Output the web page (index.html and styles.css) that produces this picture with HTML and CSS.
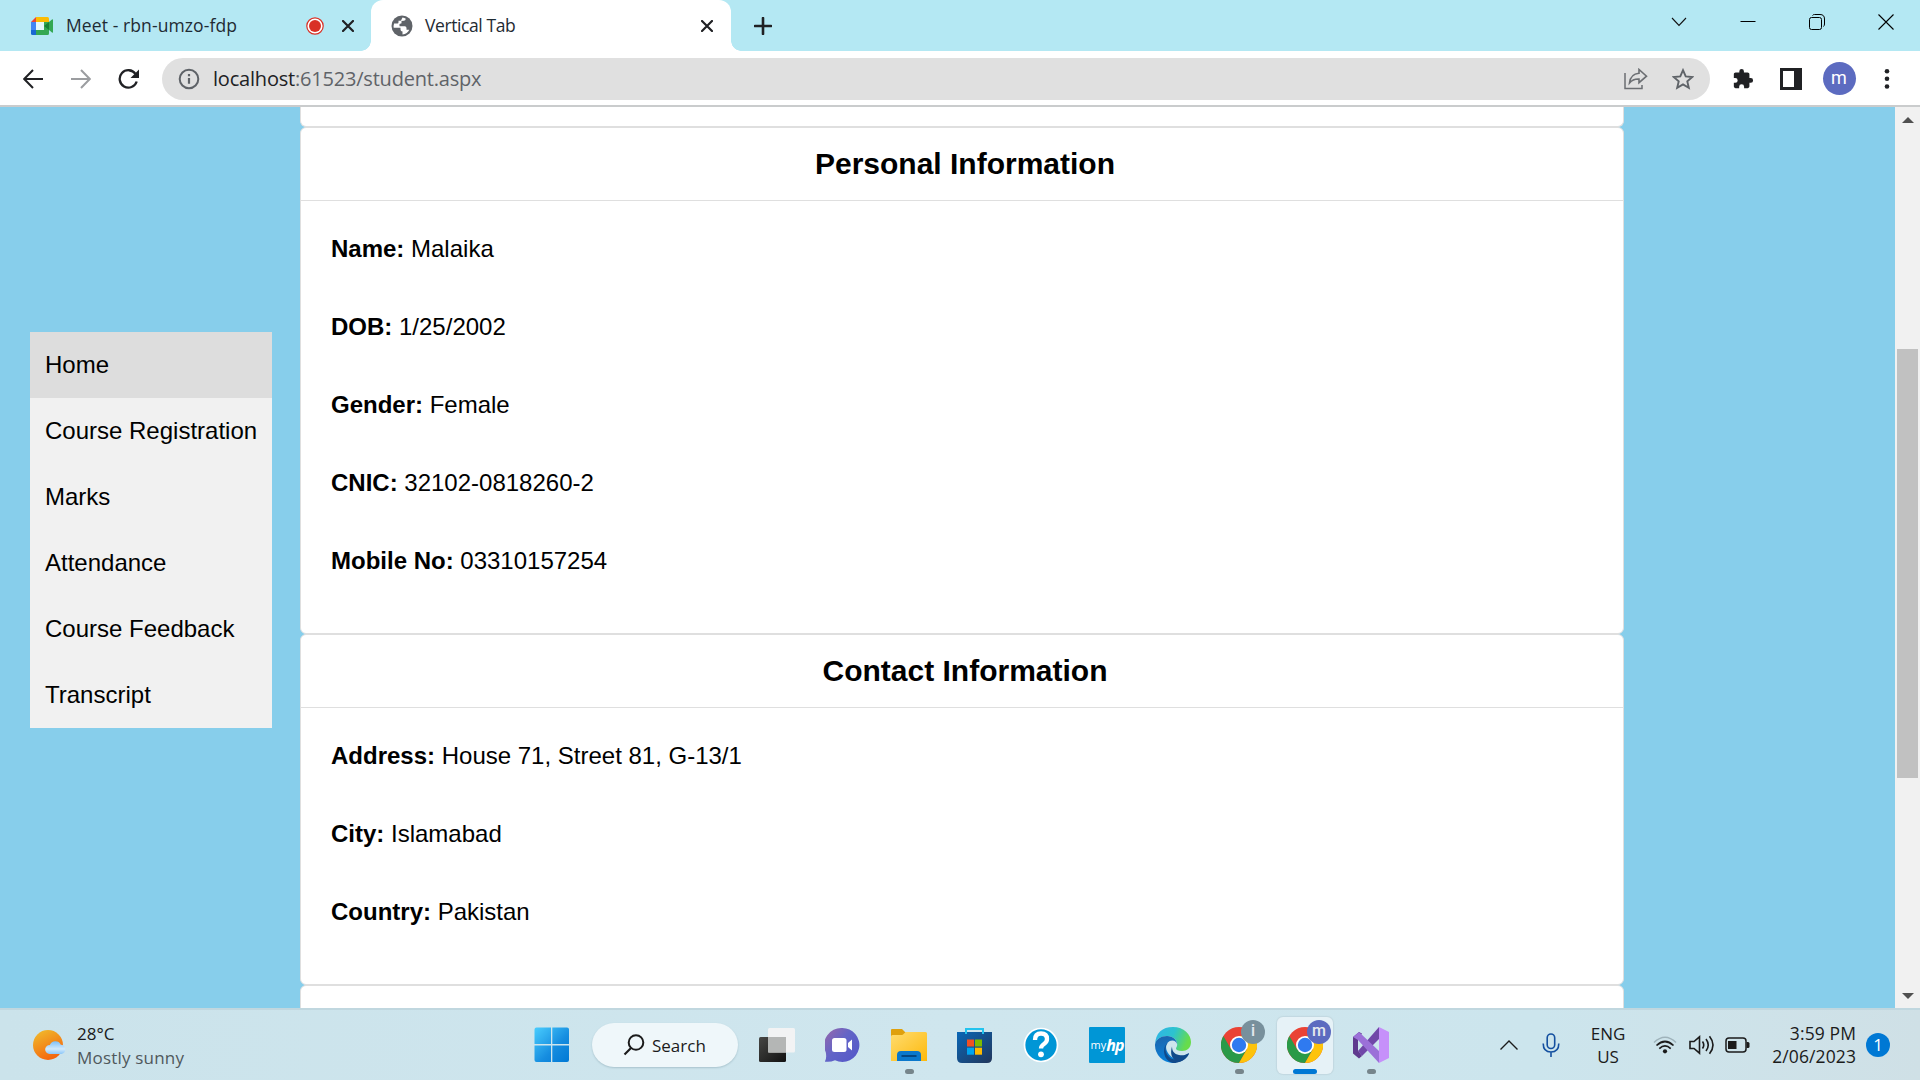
FILE: index.html
```html
<!DOCTYPE html>
<html lang="en">
<head>
<meta charset="utf-8">
<title>Vertical Tab</title>
<link rel="stylesheet" href="styles.css">
</head>
<body>
<header class="tabstrip">
  <div class="tab">
    <svg class="favicon" width="22" height="18" viewBox="0 0 22 18"><path d="M0 5 5 0v5z" fill="#ea4335"/><path d="M5 0h11.500q1.500 0 1.500 1.500V5H5z" fill="#fbbc04"/><path d="M0 5h5v8H0z" fill="#4285f4"/><path d="M0 13h5v5H1.500Q0 18 0 16.500z" fill="#1967d2"/><path d="M5 5h8v8H5z" fill="#e4f7fb"/><path d="M5 13h8V5h5v11.500q0 1.500-1.500 1.500H5z" fill="#34a853"/><path d="M13 9l5-4v8z" fill="#188038"/><path d="M18 5l3-2.600q1-.6 1 .6v12q0 1.200-1 .6L18 13z" fill="#34a853"/></svg>
    <span class="tab-title title-meet">Meet - rbn-umzo-fdp</span>
    <svg class="rec" width="18" height="18" viewBox="0 0 18 18"><circle cx="9" cy="9" r="8.200" fill="#fff" stroke="#d93025" stroke-width="1.200"/><circle cx="9" cy="9" r="6" fill="#d93025"/></svg>
    <svg class="close" width="12" height="12" viewBox="0 0 12 12"><path d="M1 1l10 10M11 1L1 11" stroke="#202124" stroke-width="2.200" stroke-linecap="round"/></svg>
  </div>
  <div class="tab active">
    <svg class="favicon" width="22" height="22" viewBox="0 0 22 22"><circle cx="11" cy="11" r="10.500" fill="#5f6368"/><path d="M11.500 2.500q2.200.2 3.300 1.200-.2 1.800-2 2l-2.300.4v2.200l-2 .8v2.100h5.300q1.700 0 1.700 1.700v1.800h2.800q-1.800 4.200-6.800 4.800v-3q-2-.2-2-2v-1.700H2.700q-.4-2 .4-4.300h3.400q1 0 1-1.200V5.800h1.800q1.200 0 1.200-1.300z" fill="#fff"/></svg>
    <span class="tab-title title-vertical">Vertical Tab</span>
    <svg class="close" width="12" height="12" viewBox="0 0 12 12"><path d="M1 1l10 10M11 1L1 11" stroke="#202124" stroke-width="2.200" stroke-linecap="round"/></svg>
  </div>
  <svg class="newtab" width="18" height="18" viewBox="0 0 18 18"><path d="M9 1v16M1 9h16" stroke="#202124" stroke-width="2.600" stroke-linecap="round"/></svg>
  <div class="winctl">
    <svg width="16" height="16" viewBox="0 0 16 16"><path d="M1 4l7 7.500L15 4" fill="none" stroke="#111" stroke-width="1.100"/></svg>
    <svg width="16" height="16" viewBox="0 0 16 16"><path d="M.5 7.500h15" stroke="#000"/></svg>
    <svg width="16" height="16" viewBox="0 0 16 16"><rect x=".5" y="3.500" width="12" height="12" rx="2" fill="none" stroke="#000"/><path d="M3.500 1.500Q4 .5 5.500.5H11q4.500 0 4.500 4.500v5q0 1.500-1 2.500" fill="none" stroke="#000"/></svg>
    <svg width="16" height="16" viewBox="0 0 16 16"><path d="M.5.5l15 15M15.500.5l-15 15" stroke="#000" stroke-width="1.100"/></svg>
  </div>
</header>
<div class="toolbar">
  <div class="cell"><svg width="20" height="20" viewBox="0 0 20 20"><path d="M20 10H1.500M10 1L1.200 10l8.800 9" fill="none" stroke="#202124" stroke-width="2"/></svg></div>
  <div class="cell"><svg width="20" height="20" viewBox="0 0 20 20"><path d="M0 10h18.500M10 1l8.800 9-8.800 9" fill="none" stroke="#9b9da0" stroke-width="2"/></svg></div>
  <div class="cell"><svg width="22" height="20" viewBox="0 0 22 20"><path d="M18.700 12.500A8.700 8.700 0 1 1 17.500 4.900" fill="none" stroke="#202124" stroke-width="2.300"/><path d="M21 .5V9h-8.500z" fill="#202124"/></svg></div>
  <div class="omnibox">
    <svg width="22" height="22" viewBox="0 0 22 22"><circle cx="11" cy="11" r="9.300" fill="none" stroke="#5f6368" stroke-width="2"/><path d="M11 10v5.800M11 6v2.200" stroke="#5f6368" stroke-width="2.200"/></svg>
    <span class="url"><b>localhost</b>:61523/student.aspx</span>
    <div class="cell"><svg width="24" height="22" viewBox="0 0 24 22"><path d="M1 5v15.500h17V17" fill="none" stroke="#6b6e72" stroke-width="1.500"/><path d="M5.500 15q1-9 9.500-9.700V1.500l7.500 6.700-7.500 6.500V11q-6-.3-9.500 4z" fill="none" stroke="#6b6e72" stroke-width="1.600"/></svg></div>
    <div class="cell star"><svg width="22" height="22" viewBox="0 0 22 22"><path d="M11 2.200l2.700 6.200 6.600.6-5 4.400 1.500 6.500-5.800-3.500-5.800 3.500 1.500-6.500-5-4.400 6.600-.6z" fill="none" stroke="#5f6368" stroke-width="1.900"/></svg></div>
  </div>
  <div class="cell"><svg width="22" height="22" viewBox="0 0 24 24"><path d="M20.500 11H19V7c0-1.100-.9-2-2-2h-4V3.500a2.500 2.500 0 0 0-5 0V5H4c-1.100 0-2 .9-2 2v3.800h1.500a2.700 2.700 0 0 1 0 5.400H2V20c0 1.100.9 2 2 2h3.800v-1.500a2.700 2.700 0 0 1 5.400 0V22H17c1.100 0 2-.9 2-2v-4h1.500a2.500 2.500 0 0 0 0-5z" fill="#202124"/></svg></div>
  <div class="cell"><svg width="22" height="22" viewBox="0 0 22 22"><path d="M0 0h22v22H0z" fill="#202124"/><path d="M3 3h11v16H3z" fill="#fff"/></svg></div>
  <div class="cell"><div class="avatar">m</div></div>
  <div class="cell"><svg width="6" height="22" viewBox="0 0 6 22"><g fill="#202124"><circle cx="3" cy="3.200" r="2.300"/><circle cx="3" cy="10.800" r="2.300"/><circle cx="3" cy="18.500" r="2.300"/></g></svg></div>
</div>
<div class="page">
  <nav class="menu">
    <a class="current">Home</a><a>Course Registration</a><a>Marks</a><a>Attendance</a><a>Course Feedback</a><a>Transcript</a>
  </nav>
  <main class="cards">
    <section class="card previous"></section>
    <section class="card personal">
      <h2>Personal Information</h2>
      <div class="card-body">
        <p><b>Name:</b> Malaika</p><p><b>DOB:</b> 1/25/2002</p><p><b>Gender:</b> Female</p><p><b>CNIC:</b> 32102-0818260-2</p><p><b>Mobile No:</b> 03310157254</p>
      </div>
    </section>
    <section class="card contact">
      <h2>Contact Information</h2>
      <div class="card-body">
        <p><b>Address:</b> House 71, Street 81, G-13/1</p><p><b>City:</b> Islamabad</p><p><b>Country:</b> Pakistan</p>
      </div>
    </section>
    <section class="card next"></section>
  </main>
  <div class="scrollbar">
    <svg width="12" height="6" viewBox="0 0 12 6"><path d="M0 6l6-6 6 6z" fill="#505050"/></svg>
    <div class="thumb"></div>
    <svg width="12" height="6" viewBox="0 0 12 6"><path d="M0 0l6 6 6-6z" fill="#505050"/></svg>
  </div>
</div>
<footer class="taskbar">
  <div class="weather">
    <svg width="34" height="32" viewBox="0 0 34 32"><defs><linearGradient id="sun" x1=".2" y1="0" x2=".7" y2="1"><stop stop-color="#f0b92c"/><stop offset="1" stop-color="#f4600c"/></linearGradient><linearGradient id="cloud" x1="0" y1="0" x2="0" y2="1"><stop stop-color="#7cc0fa"/><stop offset=".6" stop-color="#d2eafc"/><stop offset="1" stop-color="#8cc7f8"/></linearGradient></defs><circle cx="15" cy="16" r="15" fill="url(#sun)"/><path d="M16.500 25a4.500 4.500 0 0 1 .3-9 6 6 0 0 1 11-.3A4.700 4.700 0 0 1 28.500 25z" fill="url(#cloud)"/></svg>
    <div><div class="temp">28°C</div><div class="sky">Mostly sunny</div></div>
  </div>
  <div class="apps">
    <div class="app"><svg width="36" height="36" viewBox="0 0 36 36"><defs><linearGradient id="win" gradientUnits="userSpaceOnUse" x1="0" y1="0" x2="36" y2="36"><stop stop-color="#4cd0ff"/><stop offset=".6" stop-color="#158cdf"/><stop offset="1" stop-color="#0078d4"/></linearGradient></defs><path d="M1.500 2.500q0-2 2-2H18V17H1.500zM19.300.5h14.700q2 0 2 2V17H19.300zM1.500 18.500H18V35H3.500q-2 0-2-2zM19.300 18.500H36V33q0 2-2 2H19.300z" fill="url(#win)"/></svg></div>
    <div class="search"><svg width="22" height="22" viewBox="0 0 22 22"><circle cx="13" cy="8.500" r="7.300" fill="none" stroke="#1b1b1b" stroke-width="2"/><path d="M8 14L1.500 20.500" stroke="#1b1b1b" stroke-width="2.200"/></svg><span>Search</span></div>
    <div class="app"><svg width="36" height="36" viewBox="0 0 36 36"><defs><linearGradient id="dark" x1="0" y1="0" x2="1" y2="1"><stop stop-color="#474745"/><stop offset="1" stop-color="#111"/></linearGradient></defs><rect x="0" y="10" width="27" height="25" rx="1.500" fill="url(#dark)"/><rect x="9" y="1" width="27" height="24.500" rx="1.500" fill="#f2f3f4"/><path d="M9 10h18v15.500H9z" fill="#b4b6b5"/></svg></div>
    <div class="app"><svg width="36" height="36" viewBox="0 0 36 36"><defs><linearGradient id="chat" x1="0" y1="0" x2="1" y2=".8"><stop stop-color="#9a68aa"/><stop offset=".5" stop-color="#6264c7"/><stop offset="1" stop-color="#5558c8"/></linearGradient></defs><path d="M17 1a17 17 0 1 1-7 32.300Q5 35.500-.2 34.600 2 31 .7 25A17 17 0 0 1 17 1z" fill="url(#chat)"/><rect x="7" y="11" width="14.500" height="14" rx="2.500" fill="#fff"/><path d="M23 16l4-3.500v11L23 20z" fill="#fff"/></svg></div>
    <div class="app run"><svg width="36" height="36" viewBox="0 0 36 36"><defs><linearGradient id="folder" x1="0" y1="0" x2="1" y2="1"><stop stop-color="#ffdc70"/><stop offset="1" stop-color="#fdb90c"/></linearGradient></defs><path d="M0 3q0-1 1-1h10l4 4h20v6H0z" fill="#dfa00d"/><path d="M0 9.500Q0 8 1.500 8h9Q12 8 13 6.500l2-1.500h19.500Q36 5 36 6.500V34H0z" fill="url(#folder)"/><path d="M6 34v-6q0-4 4-4h16q4 0 4 4v6z" fill="#0a78cc"/><path d="M10.500 29h15" stroke="#034783" stroke-width="2"/></svg></div>
    <div class="app"><svg width="36" height="36" viewBox="0 0 36 36"><defs><linearGradient id="bag" x1="0" y1="0" x2="1" y2="1"><stop stop-color="#0967b7"/><stop offset="1" stop-color="#22365b"/></linearGradient></defs><path d="M0 5h35v26q0 5-5 5H5q-5 0-5-5z" fill="url(#bag)"/><path d="M9 7V2h17v5" fill="none" stroke="#23c3ee" stroke-width="2"/><path d="M10 12.500h7v7h-7z" fill="#f25022"/><path d="M18 12.500h7v7h-7z" fill="#7fba00"/><path d="M10 20.700h7v7h-7z" fill="#00a4ef"/><path d="M18 20.700h7v7h-7z" fill="#ffb900"/></svg></div>
    <div class="app"><svg width="36" height="36" viewBox="0 0 36 36"><circle cx="18" cy="18" r="16.500" fill="#0096d6" stroke="#fff" stroke-width="1.700"/><path d="M12 13q0-6.500 6-6.500t6 5.500q0 3-3 5t-3 4.500" fill="none" stroke="#fff" stroke-width="4.300"/><circle cx="18" cy="27.300" r="2.900" fill="#fff"/></svg></div>
    <div class="app"><div class="myhp"><span>my</span><b>hp</b></div></div>
    <div class="app"><svg width="36" height="36" viewBox="0 0 36 36"><defs><linearGradient id="edgeTop" x1="0" y1="0" x2="1" y2=".3"><stop stop-color="#2fb4e8"/><stop offset=".55" stop-color="#2dc3cf"/><stop offset="1" stop-color="#67dc4b"/></linearGradient><linearGradient id="edgeLeft" x1=".3" y1="0" x2=".5" y2="1"><stop stop-color="#1b65ad"/><stop offset="1" stop-color="#0882dc"/></linearGradient></defs><path d="M0 17Q1.500 0 18 0c11 0 18 7.500 18 15 0 6-4 9-9 9-4 0-6-1-6-2.500 0-1 1.200-1.500 1.200-4C22.200 13 18 9 12 9 5 9 1 13 0 17z" fill="url(#edgeTop)"/><path d="M0 17.500C1 12 6 9 12 9c6 0 10 4 10.200 8.500-.3-2-2.200-4-5-4-4.200 0-7.500 5-5.500 10 2.400 6 7 8.500 12.300 8.500-1 2.300-3.400 4-6 4A18 18 0 0 1 0 17.500z" fill="url(#edgeLeft)"/><path d="M14 15c-4 2.500-4.500 8-2 12.500 3 5 8.500 6 12.500 4.500 3-1 6-2.500 9-5.500-4 7-9 9.500-15.500 9.500C11 34.500 9 28 9 24c0-4 2-7.500 5-9z" fill="#114a8b"/><path d="M24 35c5-1.500 8-4 10-8 .3-.8-.2-1-1-.5-3.500 2-6 2-9 1.500-5-1-7-4-7-8.500-2 7-1 13 7 15.500z" fill="#114a8b"/></svg></div>
    <div class="app run"><svg width="36" height="36" viewBox="0 0 36 36"><use href="#chrome"/></svg><span class="badge grey">i</span></div>
    <div class="app focus"><svg width="36" height="36" viewBox="0 0 36 36"><g id="chrome"><circle cx="18" cy="18" r="18" fill="#ea4335"/><path d="M2.400 9A18 18 0 0 0 18 36l7.800-13.500H10.200z" fill="#2a9a48"/><path d="M33.600 9A18 18 0 0 1 18 36l7.800-13.500L18 9z" fill="#fdc30b"/><circle cx="18" cy="18" r="9" fill="#fff"/><circle cx="18" cy="18" r="7.200" fill="#2f7af0"/></g></svg><span class="badge violet">m</span></div>
    <div class="app run"><svg width="36" height="36" viewBox="0 0 36 36"><path d="M0 10l6-5 3 1.500L5 12.500v11L9 29l-3 2.500-6-5z" fill="#5f3a8e"/><path d="M5 24L26 0v12L9 29z" fill="#7047a8"/><path d="M0 10l6-5 20 19v12L5 13z" fill="#9b70d8"/><path d="M26 0l10 5v26l-10 5z" fill="#c690fa"/></svg></div>
  </div>
  <div class="tray">
    <svg class="up" width="18" height="10" viewBox="0 0 18 10"><path d="M.5 9.500L9 1l8.500 8.500" fill="none" stroke="#1b1b1b" stroke-width="1.400"/></svg>
    <svg class="mic" width="18" height="24" viewBox="0 0 18 24"><rect x="5.200" y="1" width="7.500" height="14.500" rx="3.700" fill="none" stroke="#1450a0" stroke-width="1.600"/><path d="M1.200 10.500q0 8.500 7.800 8.500t7.800-8.500M9 19v5" fill="none" stroke="#1450a0" stroke-width="1.600"/></svg>
    <div class="lang">ENG<br>US</div>
    <svg class="wifi" width="24" height="18" viewBox="0 0 24 18"><path d="M1 6.500q11-10.500 22 0" fill="none" stroke="#9fb3bb" stroke-width="1.500"/><g fill="none" stroke="#1b1b1b" stroke-width="1.700"><path d="M3.500 9.500q8.500-8 17 0M6.300 12.600q5.700-5.300 11.400 0"/></g><circle cx="12" cy="15.300" r="2.100" fill="#1b1b1b"/></svg>
    <svg class="volume" width="26" height="20" viewBox="0 0 26 20"><g fill="none" stroke="#1b1b1b" stroke-width="1.600"><path d="M1 6.500h4L10.500 1.800v16.400L5 13.500H1z"/><path d="M13.500 6.500q2.500 3.500 0 7M17 4q4.500 6 0 12M20.500 1.200q7 8.800 0 17.600"/></g></svg>
    <svg class="battery" width="25" height="16" viewBox="0 0 25 16"><rect x="1" y="1" width="20" height="14" rx="3" fill="none" stroke="#1b1b1b" stroke-width="1.500"/><path d="M3 4h8.500v8H3z" fill="#1b1b1b"/><path d="M21.500 5H23q1.500 0 1.500 1.500v3Q24.500 11 23 11h-1.500z" fill="#1b1b1b"/></svg>
    <div class="clock">3:59 PM<br>2/06/2023</div>
    <div class="count">1</div>
  </div>
</footer>
</body>
</html>
```

FILE: styles.css
```css
* { box-sizing: border-box; }
body { margin: 0; width: 1920px; height: 1080px; overflow: hidden; display: flex; flex-direction: column; font-family: "Open Sans", sans-serif; }
svg { display: block; flex: none; }

.tabstrip { height: 51px; background: #b4e8f3; display: flex; align-items: flex-start; }
.tab { position: relative; height: 51px; width: 371px; padding: 0 17px 0 31px; display: flex; align-items: center; }
.tab.active { width: 360px; padding: 0 18px 0 20px; background: #fff; border-radius: 12px 12px 0 0; }
.tab.active::before, .tab.active::after { content: ""; position: absolute; bottom: 0; width: 10px; height: 10px; }
.tab.active::before { left: -10px; background: radial-gradient(circle at 0 0, transparent 9.500px, #fff 10px); }
.tab.active::after { right: -10px; background: radial-gradient(circle at 100% 0, transparent 9.500px, #fff 10px); }
.tab-title { margin-left: 13px; padding-bottom: 1px; font-size: 17.500px; line-height: 24px; color: #1f2b33; white-space: nowrap; letter-spacing: 0.1px; }
.title-vertical { margin-left: 12px; letter-spacing: -0.400px; }
.rec { margin-left: auto; margin-right: 18px; }
.active .close { margin-left: auto; }
.newtab { margin: 17px 0 0 23px; }
.winctl { margin-left: auto; margin-right: 26px; display: flex; gap: 53px; padding-top: 14px; }

.toolbar { height: 56px; padding: 1px 9px 0; background: #fff; border-bottom: 2px solid #cacccd; display: flex; align-items: center; }
.cell { width: 48px; display: flex; justify-content: center; align-items: center; flex: none; }
.omnibox { flex: 1; height: 42px; margin: 0 9px; padding: 0 3px 0 16px; border-radius: 21px; background: #e0e0e0; display: flex; align-items: center; }
.url { flex: 1; margin-left: 13px; font-size: 20px; letter-spacing: -0.200px; color: #5f6368; }
.url b { font-weight: 400; color: #202124; }
.star { margin-left: -1px; }
.avatar { width: 33px; height: 33px; border-radius: 50%; background: #5c6bc0; color: #fff; font: 18px/31px Roboto, sans-serif; text-align: center; }

.page { height: 901px; background: #87ceeb; display: flex; font-family: "Liberation Sans", Arial, sans-serif; font-size: 24px; color: #000; overflow: hidden; }
.menu { width: 242px; height: 396px; margin: 225px 28px 0 30px; background: #f1f1f1; }
.menu a { display: block; height: 66px; padding: 0 15px; line-height: 66px; white-space: nowrap; }
.menu .current { background: #ddd; }
.cards { width: 1324px; }
.card { background: #fff; border: 1px solid #dfdfdf; border-radius: 6px; }
.previous { height: 20px; border-top: 0; border-radius: 0 0 6px 6px; }
.personal { height: 507px; }
.contact { height: 351px; }
.next { height: 60px; }
.card h2 { margin: 0; height: 73px; padding-left: 6px; border-bottom: 1px solid #dfdfdf; font-size: 30px; line-height: 71px; text-align: center; }
.card-body { padding: 9px 30px 0; }
.card-body p { margin: 0; line-height: 78px; }
.scrollbar { width: 25px; margin-left: auto; background: #f1f1f1; display: flex; flex-direction: column; align-items: center; padding: 10px 0 9px; }
.thumb { width: 21px; height: 429px; margin: 226px 0 auto; background: #c1c1c1; }

.taskbar { height: 72px; background: linear-gradient(90deg, #cbe3eb, #cfe6ee 50%, #cce5ed 80%, #cfe0e6); border-top: 2px solid #c0d7df; display: flex; align-items: stretch; color: #1b1b1b; font-size: 17px; }
.weather { width: 518px; padding-left: 33px; display: flex; align-items: flex-start; padding-top: 12px; }
.weather svg { margin-top: 7px; }
.weather div div { margin-left: 10px; line-height: 24px; white-space: nowrap; }
.weather .sky { color: #50585c; letter-spacing: 0.200px; }
.apps { display: flex; align-items: center; }
.app { position: relative; width: 66px; height: 70px; display: flex; align-items: center; justify-content: center; }
.search { width: 146px; height: 44px; margin: 0 6px 0 8px; border-radius: 22px; background: #eff7fa; box-shadow: 0 1px 2px #a8c3cd; display: flex; align-items: center; padding-left: 31px; gap: 7px; }
.run::after, .focus::after { content: ""; position: absolute; bottom: 6px; left: 29px; width: 9px; height: 5px; border-radius: 3px; background: #76858b; }
.focus::after { left: 21px; width: 24px; background: #0078d4; }
.focus::before { content: ""; position: absolute; left: 5px; top: 7px; width: 56px; height: 57px; border-radius: 6px; background: #e6f2f7; box-shadow: 0 0 1px 1px #c2d8e0; }
.focus svg { position: relative; }
.badge { position: absolute; left: 35px; top: 10px; width: 24px; height: 24px; border-radius: 50%; color: #e5e9ee; font: 500 16px/22px Roboto, sans-serif; text-align: center; }
.grey { background: #78909c; }
.violet { background: #5c6bc0; }
.myhp { width: 36px; height: 36px; background: #0096d6; border-radius: 1px; color: #fff; display: flex; align-items: center; justify-content: center; font: 11px/36px "Open Sans", sans-serif; }
.myhp b { font-size: 16px; font-style: italic; letter-spacing: -1px; }
.tray { margin-left: auto; width: 420px; display: flex; align-items: center; line-height: 23px; padding-bottom: 1px; }
.mic { margin-left: 24px; }
.lang { width: 60px; margin-left: 18px; text-align: center; }
.wifi { margin-left: 15px; }
.volume { margin-left: 12px; }
.battery { margin-left: 10px; }
.clock { width: 106px; text-align: right; white-space: nowrap; font-size: 17.500px; letter-spacing: 0.100px; }
.count { width: 24px; height: 24px; margin-left: 10px; border-radius: 50%; background: #0078d4; color: #fff; text-align: center; font-size: 17px; line-height: 23px; }
```
